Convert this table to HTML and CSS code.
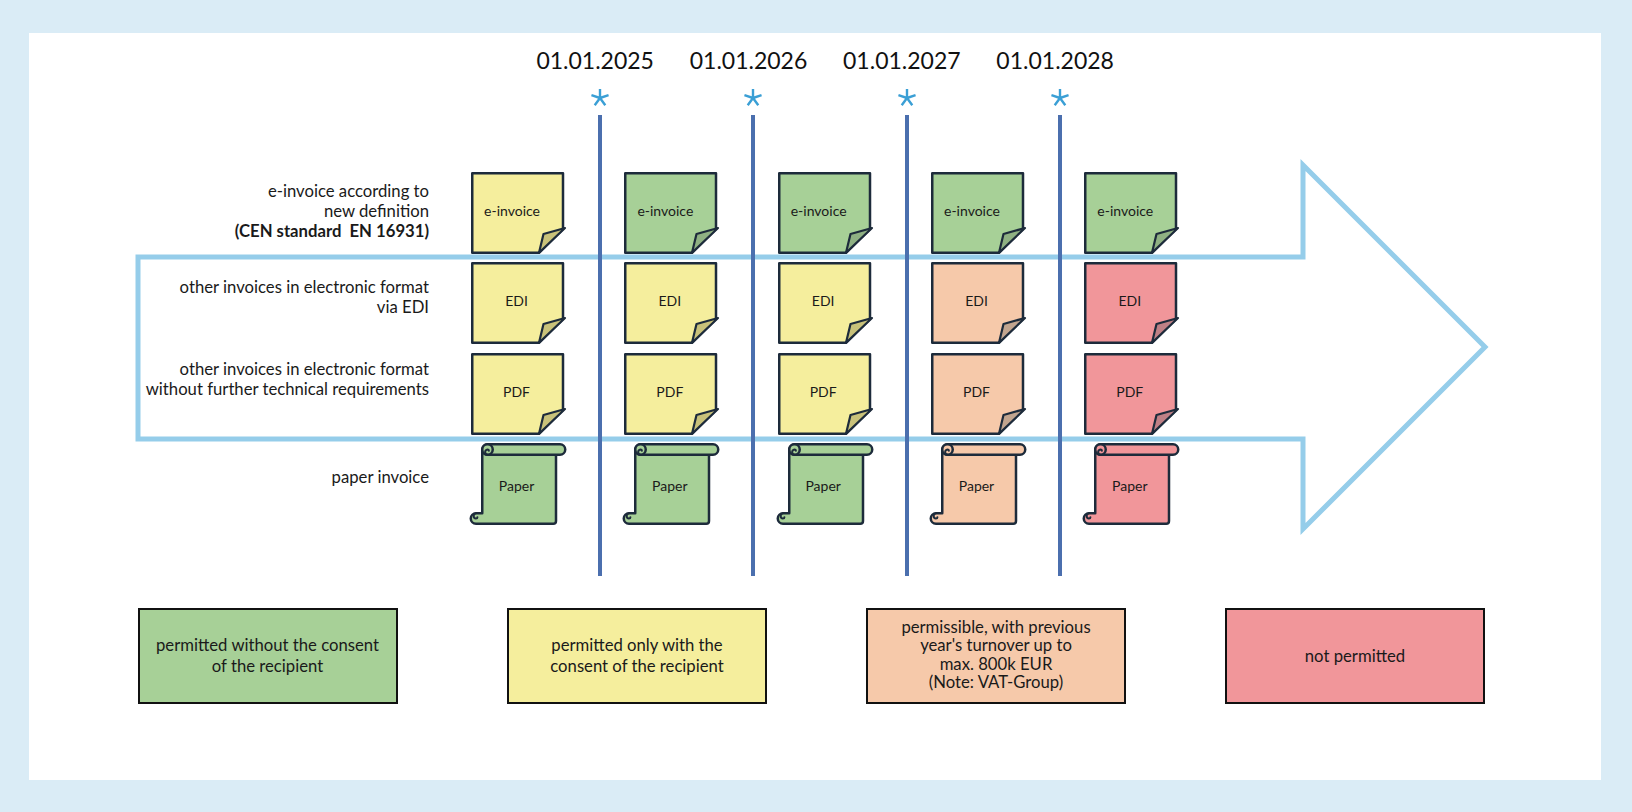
FILE: index.html
```html
<!DOCTYPE html>
<html lang="en">
<head>
<meta charset="utf-8">
<title>E-invoicing timeline</title>
<link rel="stylesheet" href="styles.css">
</head>
<body>
<div class="panel">
  <svg class="arrow" viewBox="0 0 1572 747" width="1572" height="747">
    <path d="M109 224H1274V132L1456 314L1274 496V406H109Z"/>
  </svg>

  <div class="chart">
    <div class="date d1">01.01.2025</div>
    <div class="date d2">01.01.2026</div>
    <div class="date d3">01.01.2027</div>
    <div class="date d4">01.01.2028</div>

    <div class="sep s1"><svg class="star" viewBox="-10 -10 20 20" width="20" height="20"><path d="M0 0V-9M0 0L8.56 -2.78M0 0L5.29 7.28M0 0L-5.29 7.28M0 0L-8.56 -2.78"/></svg><div class="vline"></div></div>
    <div class="sep s2"><svg class="star" viewBox="-10 -10 20 20" width="20" height="20"><path d="M0 0V-9M0 0L8.56 -2.78M0 0L5.29 7.28M0 0L-5.29 7.28M0 0L-8.56 -2.78"/></svg><div class="vline"></div></div>
    <div class="sep s3"><svg class="star" viewBox="-10 -10 20 20" width="20" height="20"><path d="M0 0V-9M0 0L8.56 -2.78M0 0L5.29 7.28M0 0L-5.29 7.28M0 0L-8.56 -2.78"/></svg><div class="vline"></div></div>
    <div class="sep s4"><svg class="star" viewBox="-10 -10 20 20" width="20" height="20"><path d="M0 0V-9M0 0L8.56 -2.78M0 0L5.29 7.28M0 0L-5.29 7.28M0 0L-8.56 -2.78"/></svg><div class="vline"></div></div>

    <div class="label l1">e-invoice according to<br>new definition<br><b>(CEN standard&nbsp; EN 16931)</b></div>
    <div class="label l2">other invoices in electronic format<br>via EDI</div>
    <div class="label l3">other invoices in electronic format<br>without further technical requirements</div>
    <div class="label l4">paper invoice</div>

    <!-- row 1: e-invoice -->
    <div class="note r1 c1 yel"><svg viewBox="0 0 95 82" width="95" height="82"><path class="bd" d="M1.25 1.25H92V57L68 80.75H1.25Z"/><path class="fl" d="M68 80.75L72.5 62L94 56Z"/></svg><span class="txt wide">e-invoice</span></div>
    <div class="note r1 c2 grn"><svg viewBox="0 0 95 82" width="95" height="82"><path class="bd" d="M1.25 1.25H92V57L68 80.75H1.25Z"/><path class="fl" d="M68 80.75L72.5 62L94 56Z"/></svg><span class="txt wide">e-invoice</span></div>
    <div class="note r1 c3 grn"><svg viewBox="0 0 95 82" width="95" height="82"><path class="bd" d="M1.25 1.25H92V57L68 80.75H1.25Z"/><path class="fl" d="M68 80.75L72.5 62L94 56Z"/></svg><span class="txt wide">e-invoice</span></div>
    <div class="note r1 c4 grn"><svg viewBox="0 0 95 82" width="95" height="82"><path class="bd" d="M1.25 1.25H92V57L68 80.75H1.25Z"/><path class="fl" d="M68 80.75L72.5 62L94 56Z"/></svg><span class="txt wide">e-invoice</span></div>
    <div class="note r1 c5 grn"><svg viewBox="0 0 95 82" width="95" height="82"><path class="bd" d="M1.25 1.25H92V57L68 80.75H1.25Z"/><path class="fl" d="M68 80.75L72.5 62L94 56Z"/></svg><span class="txt wide">e-invoice</span></div>

    <!-- row 2: EDI -->
    <div class="note r2 c1 yel"><svg viewBox="0 0 95 82" width="95" height="82"><path class="bd" d="M1.25 1.25H92V57L68 80.75H1.25Z"/><path class="fl" d="M68 80.75L72.5 62L94 56Z"/></svg><span class="txt">EDI</span></div>
    <div class="note r2 c2 yel"><svg viewBox="0 0 95 82" width="95" height="82"><path class="bd" d="M1.25 1.25H92V57L68 80.75H1.25Z"/><path class="fl" d="M68 80.75L72.5 62L94 56Z"/></svg><span class="txt">EDI</span></div>
    <div class="note r2 c3 yel"><svg viewBox="0 0 95 82" width="95" height="82"><path class="bd" d="M1.25 1.25H92V57L68 80.75H1.25Z"/><path class="fl" d="M68 80.75L72.5 62L94 56Z"/></svg><span class="txt">EDI</span></div>
    <div class="note r2 c4 pch"><svg viewBox="0 0 95 82" width="95" height="82"><path class="bd" d="M1.25 1.25H92V57L68 80.75H1.25Z"/><path class="fl" d="M68 80.75L72.5 62L94 56Z"/></svg><span class="txt">EDI</span></div>
    <div class="note r2 c5 red"><svg viewBox="0 0 95 82" width="95" height="82"><path class="bd" d="M1.25 1.25H92V57L68 80.75H1.25Z"/><path class="fl" d="M68 80.75L72.5 62L94 56Z"/></svg><span class="txt">EDI</span></div>

    <!-- row 3: PDF -->
    <div class="note r3 c1 yel"><svg viewBox="0 0 95 82" width="95" height="82"><path class="bd" d="M1.25 1.25H92V57L68 80.75H1.25Z"/><path class="fl" d="M68 80.75L72.5 62L94 56Z"/></svg><span class="txt">PDF</span></div>
    <div class="note r3 c2 yel"><svg viewBox="0 0 95 82" width="95" height="82"><path class="bd" d="M1.25 1.25H92V57L68 80.75H1.25Z"/><path class="fl" d="M68 80.75L72.5 62L94 56Z"/></svg><span class="txt">PDF</span></div>
    <div class="note r3 c3 yel"><svg viewBox="0 0 95 82" width="95" height="82"><path class="bd" d="M1.25 1.25H92V57L68 80.75H1.25Z"/><path class="fl" d="M68 80.75L72.5 62L94 56Z"/></svg><span class="txt">PDF</span></div>
    <div class="note r3 c4 pch"><svg viewBox="0 0 95 82" width="95" height="82"><path class="bd" d="M1.25 1.25H92V57L68 80.75H1.25Z"/><path class="fl" d="M68 80.75L72.5 62L94 56Z"/></svg><span class="txt">PDF</span></div>
    <div class="note r3 c5 red"><svg viewBox="0 0 95 82" width="95" height="82"><path class="bd" d="M1.25 1.25H92V57L68 80.75H1.25Z"/><path class="fl" d="M68 80.75L72.5 62L94 56Z"/></svg><span class="txt">PDF</span></div>

    <!-- row 4: Paper -->
    <div class="note r4 c1 grn"><svg viewBox="0 0 95 82" width="95" height="82"><path class="bd" d="M11.25 6H85V78Q85 80.75 82.25 80.75H5A5.25 5.25 0 0 1 5 70.25H11.25Z"/><path class="ln" d="M5 70.25A2.7 2.7 0 0 0 5 75.6A1.4 1.4 0 0 0 6.4 74.2"/><rect class="bd" x="11.25" y="1.25" width="83" height="10.5" rx="5.25"/><circle class="bd" cx="16.5" cy="6.5" r="5.25"/><path class="ln" d="M16.5 11.75A2.7 2.7 0 0 1 16.5 6.4A1.4 1.4 0 0 1 17.9 7.8"/></svg><span class="txt scroll">Paper</span></div>
    <div class="note r4 c2 grn"><svg viewBox="0 0 95 82" width="95" height="82"><path class="bd" d="M11.25 6H85V78Q85 80.75 82.25 80.75H5A5.25 5.25 0 0 1 5 70.25H11.25Z"/><path class="ln" d="M5 70.25A2.7 2.7 0 0 0 5 75.6A1.4 1.4 0 0 0 6.4 74.2"/><rect class="bd" x="11.25" y="1.25" width="83" height="10.5" rx="5.25"/><circle class="bd" cx="16.5" cy="6.5" r="5.25"/><path class="ln" d="M16.5 11.75A2.7 2.7 0 0 1 16.5 6.4A1.4 1.4 0 0 1 17.9 7.8"/></svg><span class="txt scroll">Paper</span></div>
    <div class="note r4 c3 grn"><svg viewBox="0 0 95 82" width="95" height="82"><path class="bd" d="M11.25 6H85V78Q85 80.75 82.25 80.75H5A5.25 5.25 0 0 1 5 70.25H11.25Z"/><path class="ln" d="M5 70.25A2.7 2.7 0 0 0 5 75.6A1.4 1.4 0 0 0 6.4 74.2"/><rect class="bd" x="11.25" y="1.25" width="83" height="10.5" rx="5.25"/><circle class="bd" cx="16.5" cy="6.5" r="5.25"/><path class="ln" d="M16.5 11.75A2.7 2.7 0 0 1 16.5 6.4A1.4 1.4 0 0 1 17.9 7.8"/></svg><span class="txt scroll">Paper</span></div>
    <div class="note r4 c4 pch"><svg viewBox="0 0 95 82" width="95" height="82"><path class="bd" d="M11.25 6H85V78Q85 80.75 82.25 80.75H5A5.25 5.25 0 0 1 5 70.25H11.25Z"/><path class="ln" d="M5 70.25A2.7 2.7 0 0 0 5 75.6A1.4 1.4 0 0 0 6.4 74.2"/><rect class="bd" x="11.25" y="1.25" width="83" height="10.5" rx="5.25"/><circle class="bd" cx="16.5" cy="6.5" r="5.25"/><path class="ln" d="M16.5 11.75A2.7 2.7 0 0 1 16.5 6.4A1.4 1.4 0 0 1 17.9 7.8"/></svg><span class="txt scroll">Paper</span></div>
    <div class="note r4 c5 red"><svg viewBox="0 0 95 82" width="95" height="82"><path class="bd" d="M11.25 6H85V78Q85 80.75 82.25 80.75H5A5.25 5.25 0 0 1 5 70.25H11.25Z"/><path class="ln" d="M5 70.25A2.7 2.7 0 0 0 5 75.6A1.4 1.4 0 0 0 6.4 74.2"/><rect class="bd" x="11.25" y="1.25" width="83" height="10.5" rx="5.25"/><circle class="bd" cx="16.5" cy="6.5" r="5.25"/><path class="ln" d="M16.5 11.75A2.7 2.7 0 0 1 16.5 6.4A1.4 1.4 0 0 1 17.9 7.8"/></svg><span class="txt scroll">Paper</span></div>
  </div>

  <div class="legend">
    <div class="key grn first">permitted without the consent<br>of the recipient</div>
    <div class="key yel">permitted only with the<br>consent of the recipient</div>
    <div class="key pch tight">permissible, with previous<br>year's turnover up to<br>max. 800k EUR<br>(Note: VAT-Group)</div>
    <div class="key red">not permitted</div>
  </div>
</div>
</body>
</html>
```

FILE: styles.css
```css
html, body {
  margin: 0;
  padding: 0;
}
body {
  background: #daecf6;
  padding: 33px 31px 32px 29px;
  font-family: Lato, "Liberation Sans", sans-serif;
  color: #1a1a1a;
}
.panel {
  position: relative;
  width: 1572px;
  height: 747px;
  background: #ffffff;
}
.arrow {
  position: absolute;
  left: 0;
  top: 0;
  pointer-events: none;
}
.arrow path {
  fill: none;
  stroke: #95cdea;
  stroke-width: 5;
  stroke-linejoin: miter;
}

/* colour themes */
.yel { --c: #f5ee9d; --f: #c9c27a; }
.grn { --c: #a7d097; --f: #8fb183; }
.pch { --c: #f6c9aa; --f: #c2a58f; }
.red { --c: #f1969a; --f: #bf8086; }

.chart {
  position: relative;
  display: grid;
  grid-template-columns: 442px repeat(4, 95px 58.333px) 95px 1fr;
  grid-template-rows: 52px 27px 60px 90px 91px 90px 81px 52px;
}

.date {
  grid-row: 1;
  justify-self: center;
  margin-top: 14px;
  font-size: 23px;
  line-height: 26px;
  color: #111;
  white-space: nowrap;
}
.d1 { grid-column: 2 / span 3; }
.d2 { grid-column: 4 / span 3; }
.d3 { grid-column: 6 / span 3; }
.d4 { grid-column: 8 / span 3; }

.sep {
  grid-row: 2 / 9;
  justify-self: center;
  margin-left: 9.6px;
  display: flex;
  flex-direction: column;
  align-items: center;
}
.s1 { grid-column: 3; }
.s2 { grid-column: 5; }
.s3 { grid-column: 7; }
.s4 { grid-column: 9; }
.star {
  margin-top: 3.3px;
  display: block;
}
.star path {
  fill: none;
  stroke: #3a9fd5;
  stroke-width: 2.4;
  stroke-linecap: butt;
}
.vline {
  flex: 1;
  width: 4px;
  margin-top: 6.7px;
  background: #4b6fae;
}

.label {
  grid-column: 1;
  text-align: right;
  padding-right: 42px;
  font-size: 16.7px;
  line-height: 20px;
  white-space: nowrap;
}
.label b { font-weight: 700; }
.l1 { grid-row: 4; padding-top: 8.5px; }
.l2 { grid-row: 5; padding-top: 15px; }
.l3 { grid-row: 6; padding-top: 6px; }
.l4 { grid-row: 7; padding-top: 24px; }

.note {
  display: grid;
  width: 95px;
  height: 82px;
}
.note > * { grid-area: 1 / 1; }
.note svg { display: block; overflow: visible; }
.note .bd {
  fill: var(--c);
  stroke: #1d2b3b;
  stroke-width: 2.5;
  stroke-linejoin: round;
}
.note .fl {
  fill: var(--f);
  stroke: #1d2b3b;
  stroke-width: 2.2;
  stroke-linejoin: round;
}
.note .ln {
  fill: none;
  stroke: #1d2b3b;
  stroke-width: 2;
  stroke-linecap: round;
}
.txt {
  place-self: center;
  margin-right: 4px;
  margin-bottom: 4px;
  font-size: 14px;
  line-height: 16px;
  color: #1a1a1a;
}
.txt.wide { margin-right: 13px; }
.txt.scroll { margin-bottom: 0; margin-top: 3px; }

.r1 { grid-row: 4; }
.r2 { grid-row: 5; }
.r3 { grid-row: 6; }
.r4 { grid-row: 7; }
.c1 { grid-column: 2; }
.c2 { grid-column: 4; }
.c3 { grid-column: 6; }
.c4 { grid-column: 8; }
.c5 { grid-column: 10; }

.legend {
  display: flex;
  gap: 99px;
  margin: 32px 0 0 108.5px;
}
.key {
  box-sizing: border-box;
  width: 260px;
  height: 96px;
  border: 2px solid #111;
  background: var(--c);
  display: flex;
  align-items: center;
  justify-content: center;
  text-align: center;
  font-size: 16.7px;
  line-height: 21px;
  color: #1a1a1a;
  white-space: nowrap;
}
.key.first { margin-right: 10.5px; }
.key.tight { line-height: 18.4px; padding-bottom: 3px; }
```
